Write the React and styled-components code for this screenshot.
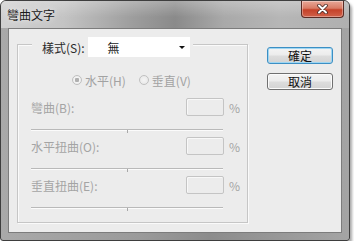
import React from 'react';
import styled, { createGlobalStyle } from 'styled-components';

const GlobalStyle = createGlobalStyle`
  html, body {
    margin: 0;
    padding: 0;
    background: #ffffff;
  }
  body {
    font-family: "Noto Sans CJK TC", "Noto Sans", "Liberation Sans", sans-serif;
  }
`;

const Window = styled.div`
  box-sizing: border-box;
  width: 350px;
  height: 241px;
  display: flex;
  flex-direction: column;
  border: 1px solid #3e3e3e;
  border-radius: 6px 6px 3px 3px;
  background: linear-gradient(90deg, #a9a9a9 0%, #9a9a9a 40%, #8c8c8c 60%, #a4a4a4 100%);
  box-shadow: 2px 3px 3px rgba(0, 0, 0, 0.35);
`;

const TitleBar = styled.div`
  height: 27px;
  display: flex;
  justify-content: space-between;
  align-items: flex-start;
  border-radius: 5px 5px 0 0;
  background:
    linear-gradient(180deg, rgba(255,255,255,0.25) 0%, rgba(255,255,255,0) 60%),
    linear-gradient(90deg, #d0d0d0 0%, #c4c4c4 18%, #9d9d9d 38%, #8a8a8a 50%, #a9a9a9 64%, #b6b6b6 80%, #b0b0b0 100%);
`;

const Title = styled.span`
  margin: 7px 0 0 6px;
  font-size: 12px;
  line-height: 14px;
  color: #1a1a1a;
  text-shadow: 0 0 6px rgba(255, 255, 255, 0.9);
`;

const CloseButton = styled.div`
  width: 43px;
  height: 17px;
  margin-right: 5px;
  box-sizing: border-box;
  display: flex;
  align-items: center;
  justify-content: center;
  border: 1px solid #5a2b24;
  border-top: none;
  border-radius: 0 0 4px 4px;
  background: linear-gradient(180deg, #e8a898 0%, #d97c66 45%, #c54229 55%, #d0614a 100%);
  box-shadow: inset 0 0 0 1px rgba(255, 255, 255, 0.35);
`;

const Client = styled.div`
  flex: 1;
  margin: 0 7px 7px 7px;
  display: flex;
  align-items: flex-start;
  padding: 0 0 0 8px;
  background: #ececec;
  border: 1px solid #7c7c7c;
`;

const GroupBox = styled.div`
  box-sizing: border-box;
  width: 231px;
  height: 179px;
  margin-top: 15px;
  border: 1px solid #c6c6c6;
  box-shadow: inset 1px 1px 0 #fafafa, 1px 1px 0 #fafafa;
`;

const Header = styled.div`
  width: fit-content;
  height: 20px;
  display: flex;
  align-items: center;
  margin: -8px 0 0 14px;
  padding: 0 3px 0 10px;
  background: #ececec;
`;

const StyleLabel = styled.span`
  font-size: 12px;
  color: #2a2a2a;
  margin-right: 3px;
`;

const Select = styled.div`
  box-sizing: border-box;
  width: 102px;
  height: 20px;
  display: flex;
  align-items: center;
  justify-content: space-between;
  padding: 0 5px 0 20px;
  background: #ffffff;
  font-size: 12px;
  color: #1a1a1a;
`;

const Arrow = styled.span`
  width: 0;
  height: 0;
  border-left: 3px solid transparent;
  border-right: 3px solid transparent;
  border-top: 3px solid #111;
`;

const RadioRow = styled.div`
  display: flex;
  align-items: center;
  height: 14px;
  margin: 16px 0 0 54px;
  gap: 13px;
`;

const RadioOption = styled.span`
  display: flex;
  align-items: center;
  gap: 3px;
  font-size: 12px;
  color: #a2a2a2;
`;

const RadioDot = styled.span`
  box-sizing: border-box;
  width: 10px;
  height: 10px;
  border-radius: 50%;
  border: 1px solid #c0c0c0;
  background: radial-gradient(circle, ${p => (p.$on ? '#b0b0b0 0 2px, #f4f4f4 2.5px' : '#f4f4f4 0')}, #e6e6e6 100%);
`;

const Field = styled.div`
  margin-top: ${p => p.$top}px;
`;

const Row = styled.div`
  display: grid;
  grid-template-columns: 155px 38px auto;
  align-items: center;
  height: 18px;
  margin-left: 13px;
`;

const FieldLabel = styled.span`
  font-size: 12px;
  color: #a4a4a4;
`;

const NumberBox = styled.div`
  box-sizing: border-box;
  height: 18px;
  border: 1px solid #c4c4c4;
  border-radius: 2px;
  background: #ececec;
  box-shadow: inset 1px 1px 0 #f8f8f8;
`;

const Percent = styled.span`
  margin-left: 5px;
  font-size: 12px;
  color: #a4a4a4;
`;

const Slider = styled.div`
  position: relative;
  width: 192px;
  height: 2px;
  margin: 13px 0 0 13px;
  border-top: 1px solid #b9b9b9;
  border-bottom: 1px solid #fbfbfb;
  box-sizing: border-box;

  &::after {
    content: '';
    position: absolute;
    left: 96px;
    top: 0;
    width: 1px;
    height: 3px;
    background: #a8a8a8;
  }
`;

const Buttons = styled.div`
  display: flex;
  flex-direction: column;
  gap: 9px;
  margin: 18px 0 0 19px;
`;

const Button = styled.div`
  box-sizing: border-box;
  width: 66px;
  height: 17px;
  display: flex;
  align-items: center;
  justify-content: center;
  border: 1px solid ${p => (p.$primary ? '#3c8fc4' : '#707070')};
  border-radius: 3px;
  background: linear-gradient(180deg, #f4f4f4 0%, #ececec 48%, #dddddd 52%, #d3d3d3 100%);
  box-shadow: inset 0 0 0 1px ${p => (p.$primary ? '#9fd6f2' : '#fbfbfb')};
  font-size: 12px;
  color: #111;
`;

const fields = [
  { label: '彎曲(B):', top: 11 },
  { label: '水平扭曲(O):', top: 6 },
  { label: '垂直扭曲(E):', top: 6 },
];

export default function App() {
  return (
    <>
      <GlobalStyle />
      <Window>
        <TitleBar>
          <Title>彎曲文字</Title>
          <CloseButton>
            <svg width="11" height="10" viewBox="0 0 11 10">
              <path d="M2 1.5 L9 8.5 M9 1.5 L2 8.5" stroke="#4a2a26" strokeWidth="3.6" strokeLinecap="round" />
              <path d="M2 1.5 L9 8.5 M9 1.5 L2 8.5" stroke="#ffffff" strokeWidth="2" strokeLinecap="round" />
            </svg>
          </CloseButton>
        </TitleBar>
        <Client>
          <GroupBox>
            <Header>
              <StyleLabel>樣式(S):</StyleLabel>
              <Select>
                <span>無</span>
                <Arrow />
              </Select>
            </Header>
            <RadioRow>
              <RadioOption><RadioDot $on />水平(H)</RadioOption>
              <RadioOption><RadioDot />垂直(V)</RadioOption>
            </RadioRow>
            {fields.map(f => (
              <Field key={f.label} $top={f.top}>
                <Row>
                  <FieldLabel>{f.label}</FieldLabel>
                  <NumberBox />
                  <Percent>%</Percent>
                </Row>
                <Slider />
              </Field>
            ))}
          </GroupBox>
          <Buttons>
            <Button $primary>確定</Button>
            <Button>取消</Button>
          </Buttons>
        </Client>
      </Window>
    </>
  );
}
